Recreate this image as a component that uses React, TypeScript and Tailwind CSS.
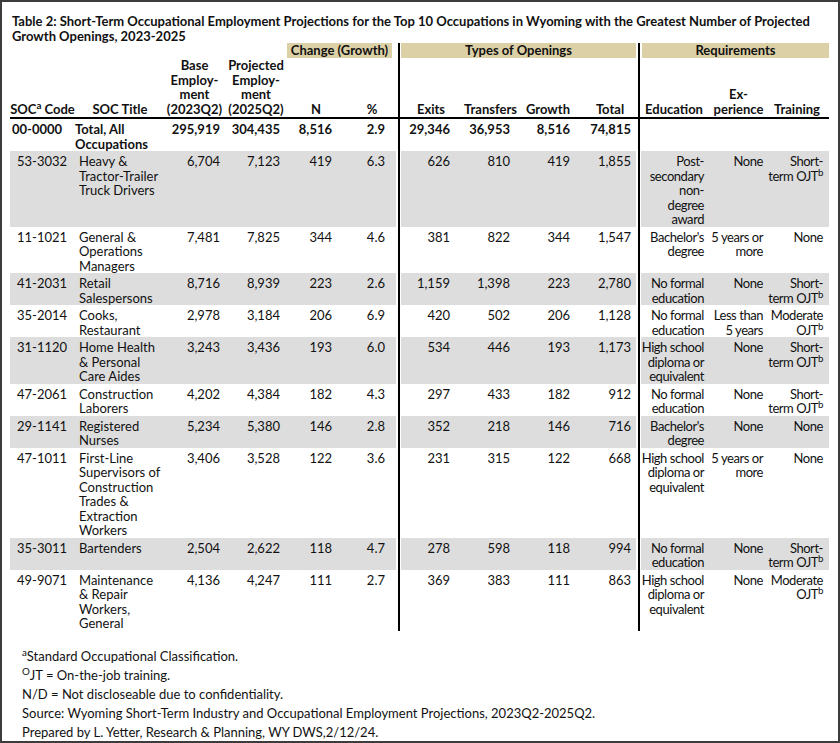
import type { ReactNode } from "react";

type Row = {
  code: string;
  title: ReactNode[];
  base: string;
  proj: string;
  n: string;
  pct: string;
  exits: string;
  transfers: string;
  growth: string;
  total: string;
  edu: ReactNode[];
  exp: ReactNode[];
  train: ReactNode[];
  shaded?: boolean;
};

const ojt = (pre: string) => (
  <>
    {pre}OJT<sup>b</sup>
  </>
);

const rows: Row[] = [
  { code: "53-3032", title: ["Heavy &", "Tractor-Trailer", "Truck Drivers"], base: "6,704", proj: "7,123", n: "419", pct: "6.3", exits: "626", transfers: "810", growth: "419", total: "1,855", edu: ["Post-", "secondary", "non-", "degree", "award"], exp: ["None"], train: ["Short-", ojt("term ")], shaded: true },
  { code: "11-1021", title: ["General &", "Operations", "Managers"], base: "7,481", proj: "7,825", n: "344", pct: "4.6", exits: "381", transfers: "822", growth: "344", total: "1,547", edu: ["Bachelor's", "degree"], exp: ["5 years or", "more"], train: ["None"] },
  { code: "41-2031", title: ["Retail", "Salespersons"], base: "8,716", proj: "8,939", n: "223", pct: "2.6", exits: "1,159", transfers: "1,398", growth: "223", total: "2,780", edu: ["No formal", "education"], exp: ["None"], train: ["Short-", ojt("term ")], shaded: true },
  { code: "35-2014", title: ["Cooks,", "Restaurant"], base: "2,978", proj: "3,184", n: "206", pct: "6.9", exits: "420", transfers: "502", growth: "206", total: "1,128", edu: ["No formal", "education"], exp: ["Less than", "5 years"], train: ["Moderate", ojt("")] },
  { code: "31-1120", title: ["Home Health", "& Personal", "Care Aides"], base: "3,243", proj: "3,436", n: "193", pct: "6.0", exits: "534", transfers: "446", growth: "193", total: "1,173", edu: ["High school", "diploma or", "equivalent"], exp: ["None"], train: ["Short-", ojt("term ")], shaded: true },
  { code: "47-2061", title: ["Construction", "Laborers"], base: "4,202", proj: "4,384", n: "182", pct: "4.3", exits: "297", transfers: "433", growth: "182", total: "912", edu: ["No formal", "education"], exp: ["None"], train: ["Short-", ojt("term ")] },
  { code: "29-1141", title: ["Registered", "Nurses"], base: "5,234", proj: "5,380", n: "146", pct: "2.8", exits: "352", transfers: "218", growth: "146", total: "716", edu: ["Bachelor's", "degree"], exp: ["None"], train: ["None"], shaded: true },
  { code: "47-1011", title: ["First-Line", "Supervisors of", "Construction", "Trades &", "Extraction", "Workers"], base: "3,406", proj: "3,528", n: "122", pct: "3.6", exits: "231", transfers: "315", growth: "122", total: "668", edu: ["High school", "diploma or", "equivalent"], exp: ["5 years or", "more"], train: ["None"] },
  { code: "35-3011", title: ["Bartenders"], base: "2,504", proj: "2,622", n: "118", pct: "4.7", exits: "278", transfers: "598", growth: "118", total: "994", edu: ["No formal", "education"], exp: ["None"], train: ["Short-", ojt("term ")], shaded: true },
  { code: "49-9071", title: ["Maintenance", "& Repair", "Workers,", "General"], base: "4,136", proj: "4,247", n: "111", pct: "2.7", exits: "369", transfers: "383", growth: "111", total: "863", edu: ["High school", "diploma or", "equivalent"], exp: ["None"], train: ["Moderate", ojt("")] },
];

function Lines({ items }: { items: ReactNode[] }) {
  return (
    <>
      {items.map((x, i) => (
        <div key={i} className="whitespace-nowrap">
          {x}
        </div>
      ))}
    </>
  );
}

function Sep() {
  return (
    <div className="w-[5px] shrink-0 flex pl-[2px]">
      <div className="w-[2px] bg-black" />
    </div>
  );
}

function DataRow({ r }: { r: Row }) {
  const c = `shrink-0 pt-[3px] whitespace-nowrap ${r.shaded ? "bg-[#dddddd]" : ""}`;
  // requirement cells: right-aligned, overflow goes left, slightly condensed
  const q = `${c} flex flex-col items-end tracking-[-0.45px]`;
  return (
    <div className="flex">
      <div className={`${c} w-[65px] pl-[7px]`}>{r.code}</div>
      <div className={`${c} w-[90px] pl-[4px]`}>
        <Lines items={r.title} />
      </div>
      <div className={`${c} w-[59px] pr-[4px] text-right`}>{r.base}</div>
      <div className={`${c} w-[60px] pr-[4px] text-right`}>{r.proj}</div>
      <div className={`${c} w-[52px] pr-[4px] text-right`}>{r.n}</div>
      <div className={`${c} w-[60px] pr-[11px] text-right`}>{r.pct}</div>
      <Sep />
      <div className={`${c} w-[54px] pr-[5px] text-right`}>{r.exits}</div>
      <div className={`${c} w-[60px] pr-[5px] text-right`}>{r.transfers}</div>
      <div className={`${c} w-[60px] pr-[5px] text-right`}>{r.growth}</div>
      <div className={`${c} w-[61px] pr-[5px] text-right`}>{r.total}</div>
      <Sep />
      <div className={`${q} w-[64px] pr-[1px]`}>
        <Lines items={r.edu} />
      </div>
      <div className={`${q} w-[60px] pr-[2px]`}>
        <Lines items={r.exp} />
      </div>
      <div className={`${q} w-[64px] pr-[6px]`}>
        <Lines items={r.train} />
      </div>
    </div>
  );
}

function Head({ className, lines }: { className: string; lines: ReactNode[] }) {
  return (
    <div className={`shrink-0 flex flex-col items-center justify-end pb-[1px] ${className}`}>
      {lines.map((x, i) => (
        <div key={i} className="whitespace-nowrap">
          {x}
        </div>
      ))}
    </div>
  );
}

export default function App() {
  return (
    <div className="w-[840px] h-[743px] border-2 border-[#3c3c3c] bg-white text-[#111] font-[Lato,sans-serif] text-[13px] leading-[14.5px] pt-[12px] pl-[8px] overflow-hidden">
      <h1 className="font-bold pl-[2px] whitespace-nowrap">
        Table 2: Short-Term Occupational Employment Projections for the Top 10 Occupations in Wyoming with the Greatest Number of Projected
        <br />
        Growth Openings, 2023-2025
      </h1>

      <div className="w-[819px]">
        {/* group bands */}
        <div className="flex h-[15px] font-bold leading-[15px]">
          <div className="w-[274px] shrink-0" />
          <div className="w-[112px] shrink-0 pl-[3px] pr-[4px]">
            <div className="bg-[#dcd0a6] h-full text-center whitespace-nowrap">Change (Growth)</div>
          </div>
          <Sep />
          <div className="w-[235px] shrink-0">
            <div className="bg-[#dcd0a6] h-full text-center">Types of Openings</div>
          </div>
          <Sep />
          <div className="w-[188px] shrink-0 pl-[1px]">
            <div className="bg-[#dcd0a6] h-full text-center">Requirements</div>
          </div>
        </div>

        {/* column heads */}
        <div className="flex h-[59px] font-bold">
          <Head className="w-[65px]" lines={[<>SOC<sup>a</sup> Code</>]} />
          <Head className="w-[90px]" lines={["SOC Title"]} />
          <Head className="w-[59px]" lines={["Base", "Employ-", "ment", "(2023Q2)"]} />
          <Head className="w-[60px] pl-[4px]" lines={["Projected", "Employ-", "ment", "(2025Q2)"]} />
          <Head className="w-[52px] pl-[12px]" lines={["N"]} />
          <Head className="w-[60px] pl-[12px]" lines={["%"]} />
          <Sep />
          <Head className="w-[54px] pl-[6px]" lines={["Exits"]} />
          <Head className="w-[60px] pl-[11px]" lines={["Transfers"]} />
          <Head className="w-[60px] pl-[6px]" lines={["Growth"]} />
          <Head className="w-[61px] pl-[9px]" lines={["Total"]} />
          <Sep />
          <Head className="w-[64px] pl-[2px]" lines={["Education"]} />
          <Head className="w-[60px] pl-[7px]" lines={["Ex-", "perience"]} />
          <Head className="w-[64px]" lines={["Training"]} />
        </div>
        <div className="h-[2px] bg-black" />

        {/* total row */}
        <div className="flex font-bold">
          <div className="shrink-0 w-[65px] pt-[3px] pl-[2px]">00-0000</div>
          <div className="shrink-0 w-[90px] pt-[3px]">
            <Lines items={["Total, All", "Occupations"]} />
          </div>
          <div className="shrink-0 w-[59px] pt-[3px] pr-[4px] text-right">295,919</div>
          <div className="shrink-0 w-[60px] pt-[3px] pr-[4px] text-right">304,435</div>
          <div className="shrink-0 w-[52px] pt-[3px] pr-[4px] text-right">8,516</div>
          <div className="shrink-0 w-[60px] pt-[3px] pr-[11px] text-right">2.9</div>
          <Sep />
          <div className="shrink-0 w-[54px] pt-[3px] pr-[5px] text-right">29,346</div>
          <div className="shrink-0 w-[60px] pt-[3px] pr-[5px] text-right">36,953</div>
          <div className="shrink-0 w-[60px] pt-[3px] pr-[5px] text-right">8,516</div>
          <div className="shrink-0 w-[61px] pt-[3px] pr-[5px] text-right">74,815</div>
          <Sep />
          <div className="shrink-0 w-[188px]" />
        </div>

        {rows.map((r) => (
          <DataRow key={r.code} r={r} />
        ))}
      </div>

      <div className="pl-[12px] pt-[16px] leading-[19px]">
        <div>
          <sup>a</sup>Standard Occupational Classification.
        </div>
        <div>
          <sup>O</sup>JT = On-the-job training.
        </div>
        <div>N/D = Not discloseable due to confidentiality.</div>
        <div>Source: Wyoming Short-Term Industry and Occupational Employment Projections, 2023Q2-2025Q2.</div>
        <div>Prepared by L. Yetter, Research &amp; Planning, WY DWS,2/12/24.</div>
      </div>
    </div>
  );
}
